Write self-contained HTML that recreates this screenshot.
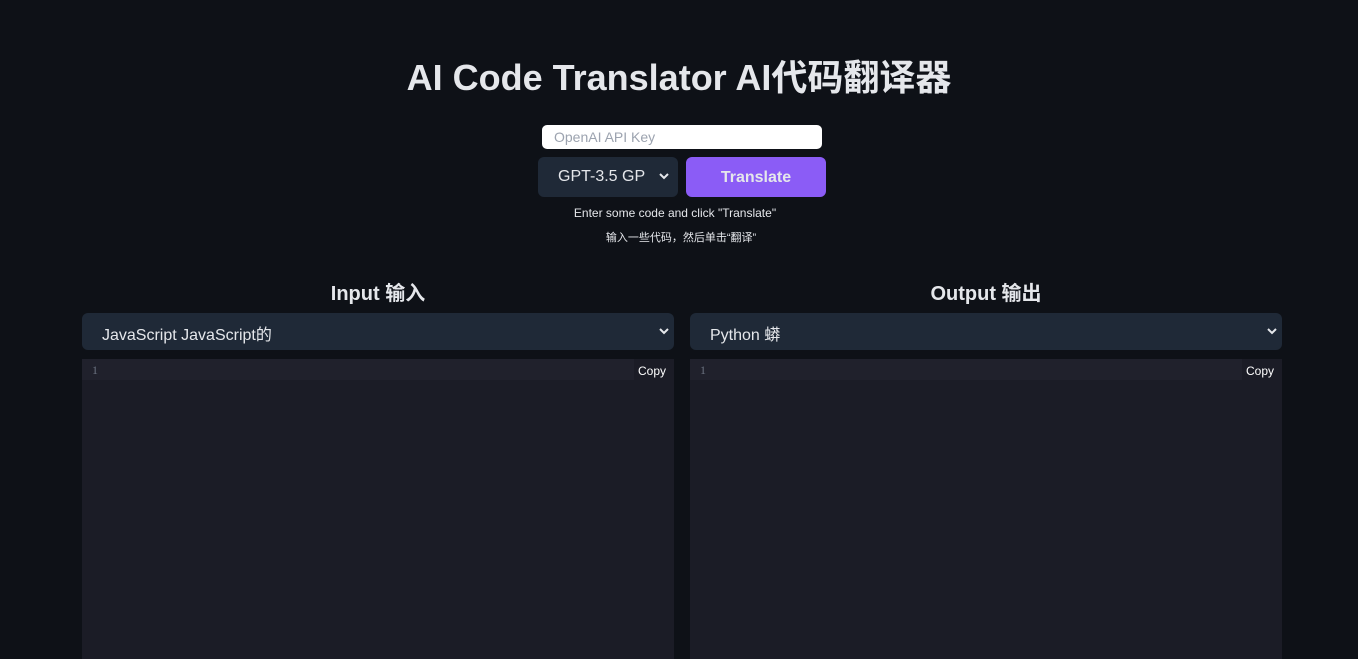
<!DOCTYPE html>
<html><head><meta charset="utf-8"><style>
*{box-sizing:border-box;margin:0;padding:0}
body{width:1358px;height:633px;overflow:hidden;background:#0e1117;font-family:"Liberation Sans","Noto Sans CJK SC",sans-serif;color:#e5e7eb}
h1{position:absolute;top:49px;left:0;width:1358px;text-align:center;font-size:36px;font-weight:bold;color:#e5e7eb}
.key{position:absolute;left:542px;top:125px;width:280px;height:24px;background:#fff;border-radius:5px;color:#9ca3af;font-size:14px;padding:4px 12px}
.model{position:absolute;left:538px;top:157px;width:140px;height:40px;background:#1f2937;border-radius:6px;color:#e5e7eb;font-size:16px;padding:11px 20px}
.model .ch{position:absolute;right:8px;top:11px}
.btn{position:absolute;left:686px;top:157px;width:140px;height:40px;background:#8b5cf6;border-radius:6px;color:#e5e7eb;font-size:16px;font-weight:bold;text-align:center;line-height:41px}
.t1{position:absolute;top:206px;width:1358px;text-align:center;font-size:12px;left:-4px}
.t2{position:absolute;top:229px;width:1358px;text-align:center;font-size:11px;left:2px}
.col{position:absolute;top:277px;width:592px}
.col h2{text-align:center;font-size:20px;font-weight:bold;height:36px}
.sel{height:37px;background:#1f2937;border-radius:6px;font-size:16px;padding:8px 20px;position:relative}
.sel .ch{position:absolute;right:4px;top:9px}
.ed{margin-top:9px;height:300px;background:#1b1c26;position:relative}
.ln{height:21px;background:#20212c;width:552px;font-family:"Liberation Serif",serif;font-size:12px;color:#6b7280;padding:4px 10px}
.copy{position:absolute;right:8px;top:5px;font-size:12px;color:#fff}
.ch svg{display:block}
</style></head><body>
<h1>AI Code Translator AI代码翻译器</h1>
<div class="key">OpenAI API Key</div>
<div class="model">GPT-3.5 GP<span class="ch"><svg width="12" height="16" viewBox="0 0 12 16"><path d="M2 6l4 4 4-4" stroke="#e5e7eb" stroke-width="2" fill="none"/></svg></span></div>
<div class="btn">Translate</div>
<div class="t1">Enter some code and click "Translate"</div>
<div class="t2">输入一些代码，然后单击“翻译”</div>
<div class="col" style="left:82px"><h2>Input 输入</h2>
<div class="sel">JavaScript JavaScript的<span class="ch"><svg width="12" height="18" viewBox="0 0 12 18"><path d="M2 7l4 4 4-4" stroke="#e5e7eb" stroke-width="2" fill="none"/></svg></span></div>
<div class="ed"><div class="ln">1</div><span class="copy">Copy</span></div></div>
<div class="col" style="left:690px"><h2>Output 输出</h2>
<div class="sel">Python 蟒<span class="ch"><svg width="12" height="18" viewBox="0 0 12 18"><path d="M2 7l4 4 4-4" stroke="#e5e7eb" stroke-width="2" fill="none"/></svg></span></div>
<div class="ed"><div class="ln">1</div><span class="copy">Copy</span></div></div>
</body></html>
